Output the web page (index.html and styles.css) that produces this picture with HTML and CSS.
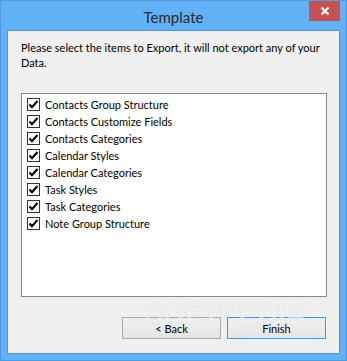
FILE: index.html
```html
<!DOCTYPE html>
<html lang="en">
<head>
  <meta charset="UTF-8" />
  <title>Template</title>
  <link rel="stylesheet" href="styles.css">
</head>
<body>
  <div class="window">
    <div class="titlebar">
      <span class="title">Template</span>
      <div class="close-btn">
        <svg width="10" height="10" viewBox="0 0 10 10">
          <path d="M1.5 1.5 L8.5 8.5 M8.5 1.5 L1.5 8.5" stroke="#fff" stroke-width="2.2" />
        </svg>
      </div>
    </div>

    <div class="client">
      <p class="intro">Please select the items to Export, it will not export any of your<br>Data.</p>

      <div class="listbox">
        <label class="item"><span class="check"></span>Contacts Group Structure</label>
        <label class="item"><span class="check"></span>Contacts Customize Fields</label>
        <label class="item"><span class="check"></span>Contacts Categories</label>
        <label class="item"><span class="check"></span>Calendar Styles</label>
        <label class="item"><span class="check"></span>Calendar Categories</label>
        <label class="item"><span class="check"></span>Task Styles</label>
        <label class="item"><span class="check"></span>Task Categories</label>
        <label class="item"><span class="check"></span>Note Group Structure</label>
      </div>

      <div class="buttons">
        <button class="btn">&lt; Back</button>
        <button class="btn default">Finish</button>
      </div>

      <div class="watermark">SOFTPEDIA<sup>®</sup></div>
    </div>
  </div>

  <script>
    // checkmark glyph for each box
    const tick = '<svg width="11" height="11" viewBox="0 0 11 11"><path d="M1.5 5.5 L4 8.2 L9.5 2" fill="none" stroke="#000" stroke-width="2.2" /></svg>';
    document.querySelectorAll('.check').forEach(box => {
      box.innerHTML = tick;
    });
  </script>
</body>
</html>
```

FILE: styles.css
```css
* {
  margin: 0;
  padding: 0;
  box-sizing: border-box;
}

body {
  width: 347px;
  height: 361px;
  overflow: hidden;
  font-family: Lato, "Noto Sans", sans-serif;
  font-size: 11px;
  color: #000;
}

.window {
  width: 347px;
  height: 361px;
  background: #62b0f6;
  border: 1px solid #4d9be0;
  display: flex;
  flex-direction: column;
}

.titlebar {
  position: relative;
  height: 29px;
  display: flex;
  justify-content: center;
  align-items: center;
  flex-shrink: 0;
}

.title {
  font-size: 15px;
  color: #2b2b2b;
  margin-top: 2px;
}

.close-btn {
  position: absolute;
  top: 0;
  right: 6px;
  width: 31px;
  height: 20px;
  background: #c75050;
  display: flex;
  justify-content: center;
  align-items: center;
}

.client {
  position: relative;
  flex: 1;
  margin: 0 6px 6px;
  background: #f0f0f0;
  border: 1px solid #4e95d6;
  padding: 9px 13px 0;
  display: flex;
  flex-direction: column;
}

.intro {
  line-height: 15px;
  color: #000;
  white-space: nowrap;
}

.listbox {
  margin-top: 23px;
  height: 204px;
  width: 306px;
  background: #fff;
  border: 1px solid #828790;
  padding: 2px 0 0 5px;
}

.item {
  display: flex;
  align-items: center;
  height: 17px;
  gap: 5px;
}

.check {
  width: 13px;
  height: 13px;
  border: 1px solid #333;
  background: #fff;
  display: flex;
  justify-content: center;
  align-items: center;
}

.buttons {
  margin-top: 20px;
  display: flex;
  justify-content: flex-end;
  gap: 6px;
  width: 305px;
}

.btn {
  width: 99px;
  height: 22px;
  font-family: inherit;
  font-size: 11px;
  color: #000;
  background: linear-gradient(#f0f0f0, #e5e5e5);
  border: 1px solid #acacac;
}

.btn.default {
  border-color: #3399ff;
}

.watermark {
  position: absolute;
  left: 136px;
  top: 266px;
  font-family: "Liberation Sans", sans-serif;
  font-weight: bold;
  font-size: 29px;
  letter-spacing: -0.5px;
  color: rgba(255, 255, 255, 0.6);
  text-shadow: 0 0 2px rgba(0, 0, 0, 0.1);
  pointer-events: none;
}

.watermark sup {
  font-size: 10px;
  font-weight: normal;
  vertical-align: top;
}
```
